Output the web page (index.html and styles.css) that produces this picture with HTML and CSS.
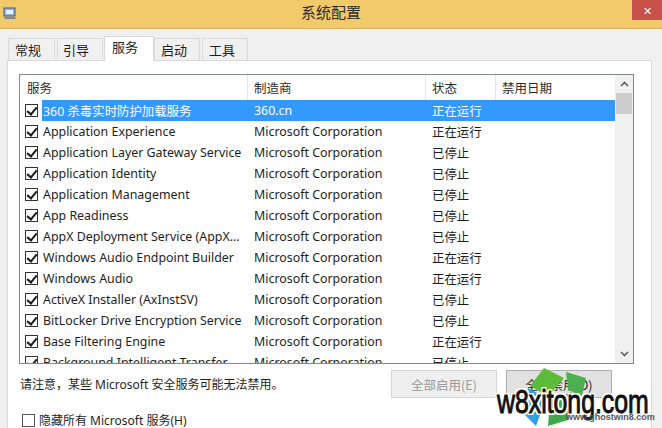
FILE: index.html
```html
<!DOCTYPE html>
<html lang="zh-CN">
<head>
<meta charset="utf-8">
<title>系统配置</title>
<link rel="stylesheet" href="styles.css">
</head>
<body>
<div class="window">
  <div class="titlebar">
    <svg class="appicon" width="14" height="14" viewBox="0 0 14 14">
      <rect x="1" y="2" width="11" height="8" fill="#8fb3d9" stroke="#4a5b7a" stroke-width="1"/>
      <rect x="3" y="4" width="7" height="4" fill="#e8f1fb"/>
      <path d="M2 11 L12 11 L13 13 L1 13 Z" fill="#7a8aa5"/>
    </svg>
    <div class="title">系统配置</div>
    <div class="close">✕</div>
  </div>
  <div class="body">
    <div class="tabs">
      <div class="tab t1">常规</div>
      <div class="tab t2">引导</div>
      <div class="tab t3 active">服务</div>
      <div class="tab t4">启动</div>
      <div class="tab t5">工具</div>
    </div>
    <div class="panel">
      <div class="listbox">
        <div class="list">
          <div class="header">
            <div class="c1">服务</div>
            <div class="c2">制造商</div>
            <div class="c3">状态</div>
            <div class="c4">禁用日期</div>
          </div>
          <div class="rows">
            <div class="row selected"><span class="cb"></span><div class="c1">360 杀毒实时防护加载服务</div><div class="c2">360.cn</div><div class="c3">正在运行</div><div class="c4"></div></div>
            <div class="row"><span class="cb"></span><div class="c1">Application Experience</div><div class="c2">Microsoft Corporation</div><div class="c3">正在运行</div><div class="c4"></div></div>
            <div class="row"><span class="cb"></span><div class="c1">Application Layer Gateway Service</div><div class="c2">Microsoft Corporation</div><div class="c3">已停止</div><div class="c4"></div></div>
            <div class="row"><span class="cb"></span><div class="c1">Application Identity</div><div class="c2">Microsoft Corporation</div><div class="c3">已停止</div><div class="c4"></div></div>
            <div class="row"><span class="cb"></span><div class="c1">Application Management</div><div class="c2">Microsoft Corporation</div><div class="c3">已停止</div><div class="c4"></div></div>
            <div class="row"><span class="cb"></span><div class="c1">App Readiness</div><div class="c2">Microsoft Corporation</div><div class="c3">已停止</div><div class="c4"></div></div>
            <div class="row"><span class="cb"></span><div class="c1">AppX Deployment Service (AppX...</div><div class="c2">Microsoft Corporation</div><div class="c3">已停止</div><div class="c4"></div></div>
            <div class="row"><span class="cb"></span><div class="c1">Windows Audio Endpoint Builder</div><div class="c2">Microsoft Corporation</div><div class="c3">正在运行</div><div class="c4"></div></div>
            <div class="row"><span class="cb"></span><div class="c1">Windows Audio</div><div class="c2">Microsoft Corporation</div><div class="c3">正在运行</div><div class="c4"></div></div>
            <div class="row"><span class="cb"></span><div class="c1">ActiveX Installer (AxInstSV)</div><div class="c2">Microsoft Corporation</div><div class="c3">已停止</div><div class="c4"></div></div>
            <div class="row"><span class="cb"></span><div class="c1">BitLocker Drive Encryption Service</div><div class="c2">Microsoft Corporation</div><div class="c3">已停止</div><div class="c4"></div></div>
            <div class="row"><span class="cb"></span><div class="c1">Base Filtering Engine</div><div class="c2">Microsoft Corporation</div><div class="c3">正在运行</div><div class="c4"></div></div>
            <div class="row"><span class="cb"></span><div class="c1">Background Intelligent Transfer</div><div class="c2">Microsoft Corporation</div><div class="c3">已停止</div><div class="c4"></div></div>
          </div>
        </div>
        <div class="scrollbar">
          <div class="arrow up"><svg width="9" height="6" viewBox="0 0 9 6"><path d="M1 5 L4.5 1.5 L8 5" fill="none" stroke="#606060" stroke-width="1.6"/></svg></div>
          <div class="thumb"></div>
          <div class="track"></div>
          <div class="arrow down"><svg width="9" height="6" viewBox="0 0 9 6"><path d="M1 1 L4.5 4.5 L8 1" fill="none" stroke="#606060" stroke-width="1.6"/></svg></div>
        </div>
      </div>
      <div class="actions">
        <div class="note">请注意，某些 Microsoft 安全服务可能无法禁用。</div>
        <div class="btn disabled">全部启用(E)</div>
        <div class="btn">全部禁用(D)</div>
      </div>
      <div class="hide"><span class="cb empty"></span>隐藏所有 Microsoft 服务(H)</div>
    </div>
  </div>
  <div class="watermark">
    <svg class="wm-logo" width="90" height="66" viewBox="0 0 90 66">
      <path d="M42 6 L62 16 L46 34 L28 24 Z" fill="#5dbb3a"/>
      <path d="M26 26 L44 36 L34 64 L20 50 Z" fill="#2e9fe0"/>
      <path d="M48 38 L70 30 L66 58 L46 64 Z" fill="#3ea84a"/>
      <path d="M64 10 L84 16 L80 34 L66 28 Z" fill="#4cb050"/>
    </svg>
    <div class="wm-text">w8xitong.com</div>
    <div class="wm-sub">www.ghostwin8.com</div>
  </div>
</div>
</body>
</html>
```
FILE: styles.css
```css
* { box-sizing: border-box; }
html, body { margin: 0; padding: 0; }
body {
  width: 662px;
  height: 428px;
  overflow: hidden;
  background: #f0f0f0;
  font-family: "Noto Sans", "Noto Sans CJK SC", sans-serif;
  font-size: 12.4px;
  color: #1e1e1e;
}
.window { position: relative; width: 662px; height: 428px; }
.titlebar {
  height: 29px;
  background: #f2c96b;
  border-bottom: 1px solid #d8b463;
  display: flex;
  align-items: center;
  position: relative;
}
.appicon { margin-left: 3px; margin-top: -3px; }
.title {
  position: absolute;
  left: 0; right: 0; top: 1px;
  text-align: center;
  font-size: 15px;
  color: #2b2b2b;
  font-family: "Noto Sans CJK SC", sans-serif;
}
.close {
  position: absolute;
  right: 0; top: 0;
  width: 30px; height: 20px;
  background: #c75048;
  color: #fff;
  font-size: 11px;
  display: flex; align-items: center; justify-content: center;
}
.body { padding: 7px 10px 0 7px; }
.tabs { display: flex; height: 24px; align-items: flex-end; padding-left: 1px; }
.tab {
  height: 22px;
  border: 1px solid #d9d9d9;
  border-bottom: none;
  background: #f0f0f0;
  padding: 0 0 0 6px;
  display: flex; align-items: center; justify-content: flex-start;
  font-family: "Noto Sans CJK SC", sans-serif;
  font-size: 13px;
  margin-right: 2px;
}
.t1 { width: 47px; }
.t2 { width: 46px; padding-left: 5px; }
.t3 { width: 50px; margin-right: 0; padding-left: 7px; }
.t4 { width: 46px; }
.t5 { width: 46px; }
.tab.active {
  height: 25px;
  background: #fff;
  margin-bottom: -1px;
  position: relative;
  z-index: 1;
  align-items: flex-start;
  padding-top: 0;
  margin-left: -1px;
}
.panel {
  background: #fff;
  border: 1px solid #d9d9d9;
  border-bottom: none;
  height: 380px;
  padding: 13px 17px 0 11px;
}
.listbox {
  height: 290px;
  border: 1px solid #828790;
  display: flex;
  overflow: hidden;
}
.list { flex: 1; overflow: hidden; }
.header {
  height: 25px;
  display: flex;
  align-items: center;
  color: #2b2b2b;
}
.header > div {
  height: 25px;
  display: flex; align-items: center;
  border-right: 1px solid #e5e5e5;
  padding-left: 6px;
  font-family: "Noto Sans CJK SC", sans-serif;
  font-size: 12.5px;
}
.header .c1 { width: 228px; padding-left: 7px; }
.header .c2 { width: 178px; }
.header .c3 { width: 70px; }
.header .c4 { flex: 1; border-right: none; }
.row {
  height: 21px;
  display: flex;
  align-items: center;
  white-space: nowrap;
}
.row .cb { margin-left: 5px; margin-right: 4px; }
.row .c1 { width: 206px; padding-left: 1px; overflow: hidden; }
.row .c2 { width: 178px; padding-left: 6px; }
.row .c3 { width: 70px; padding-left: 6px; }
.row .c4 { flex: 1; }
.row.selected .c1, .row.selected .c2, .row.selected .c3, .row.selected .c4 {
  background: #3399ff;
  color: #fff;
  height: 21px;
  display: flex; align-items: center;
}
.cb {
  display: inline-block;
  width: 13px; height: 13px;
  border: 1px solid #333;
  background: #fff;
  position: relative;
  flex: none;
}
.cb::after {
  content: "";
  position: absolute;
  left: 3px; top: 0px;
  width: 4px; height: 8px;
  border: solid #1a1a1a;
  border-width: 0 2px 2px 0;
  transform: rotate(40deg);
}
.cb.empty::after { display: none; }
.cb.empty { border-color: #555; }
.scrollbar {
  width: 18px;
  background: #f0f0f0;
  display: flex;
  flex-direction: column;
}
.arrow { height: 18px; display: flex; align-items: center; justify-content: center; }
.thumb { height: 21px; background: #cdcdcd; margin: 0 1px; }
.track { flex: 1; }
.actions {
  display: flex;
  align-items: center;
  margin-top: 6px;
  height: 28px;
  padding-right: 22px;
  gap: 9px;
}
.note {
  flex: 1;
  padding-left: 1px;
  font-size: 12px;
}
.btn {
  width: 106px;
  height: 28px;
  border: 1px solid #adadad;
  background: #e1e1e1;
  display: flex; align-items: center; justify-content: center;
  font-family: "Noto Sans CJK SC", sans-serif;
  font-size: 12.5px;
}
.btn.disabled { background: #efefef; border-color: #d6d6d6; color: #9a9a9a; }
.hide {
  margin-top: 13px;
  display: flex;
  align-items: center;
  gap: 4px;
  padding-left: 3px;
  font-size: 12px;
}
.watermark { position: absolute; left: 490px; top: 360px; width: 172px; height: 68px; }
.wm-logo { position: absolute; left: 12px; top: 2px; }
.wm-text {
  position: absolute;
  left: 7px; top: 24px;
  font-family: "Liberation Sans", sans-serif;
  font-size: 34px;
  line-height: 1;
  color: #111;
  -webkit-text-stroke: 1px #111;
  transform: scaleX(0.73);
  transform-origin: left top;
  text-shadow: 2px 0 0 #fff, -2px 0 0 #fff, 0 2px 0 #fff, 0 -2px 0 #fff, 2px 2px 0 #fff, -2px -2px 0 #fff, 2px -2px 0 #fff, -2px 2px 0 #fff;
}
.wm-sub {
  position: absolute;
  left: 76px; top: 52px;
  font-family: "Liberation Sans", sans-serif;
  font-size: 9px;
  font-weight: bold;
  color: #555;
}
```
